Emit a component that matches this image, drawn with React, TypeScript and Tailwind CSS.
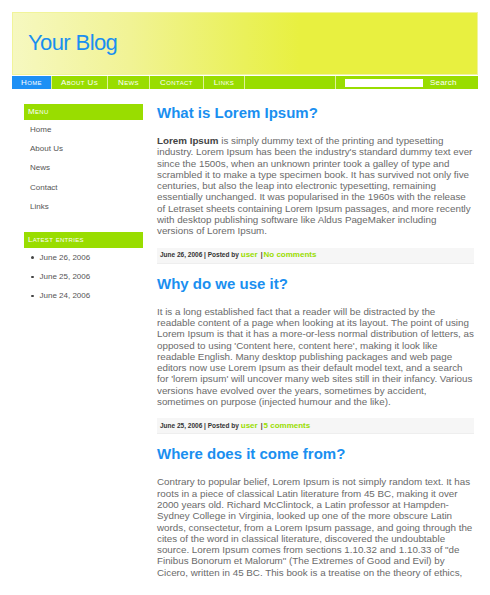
import type { ReactNode } from 'react';

const navItems = ['Home', 'About Us', 'News', 'Contact', 'Links'];
const navWidths = ['w-[39px]', 'w-[56px]', 'w-[42px]', 'w-[54px]', 'w-[41px]'];
const sideLinks = ['Home', 'About Us', 'News', 'Contact', 'Links'];
const entries = ['June 26, 2006', 'June 25, 2006', 'June 24, 2006'];

function SideHeader({ children }: { children: ReactNode }) {
  return (
    <div className="h-[16px] bg-[#99dd00] pl-[4px] text-[8px] leading-[16px] text-white [font-variant:small-caps] tracking-[0.3px]">
      {children}
    </div>
  );
}

function Post({ title, children, date, comments }: { title: string; children: ReactNode; date?: string; comments?: string }) {
  return (
    <div>
      <h2 className="text-[15px] leading-[18px] font-bold text-[#1a8ff0]">{title}</h2>
      <p className="mt-[13px] text-[9.8px] leading-[11.3px] text-[#6a6a6a]">{children}</p>
      {date && (
        <div className="mt-[11px] mb-[11px] h-[16px] bg-[#f6f6f6] border-b border-[#eeeeee] pl-[3px] flex items-center">
          <span className="text-[6.5px] font-bold text-[#333]">{date} | Posted by</span>
          <span className="ml-[2px] text-[8px] font-bold text-[#99dd00]">user</span>
          <span className="ml-[3px] text-[6.5px] font-bold text-[#333]">|</span>
          <span className="ml-[1px] text-[8px] font-bold text-[#99dd00]">{comments}</span>
        </div>
      )}
    </div>
  );
}

export default function App() {
  return (
    <div className="w-[490px] min-h-[595px] bg-white pt-[12px] font-['Liberation_Sans',Arial,sans-serif]">
      <div className="mx-[12px]">
        <header className="h-[63px] border border-[#f1f49a] bg-[linear-gradient(to_right,#f6f8c0_0%,#f1f395_25%,#eaf15a_50%,#e8f040_62%,#e8f040_100%)] pl-[15px] pt-[17px]">
          <div className="text-[22px] leading-[26px] text-[#1a8ff0] tracking-[-0.6px]">Your Blog</div>
        </header>

        <nav className="mt-[1px] h-[13px] flex bg-[#99dd00] text-white text-[8px] leading-[13px] [font-variant:small-caps] tracking-[0.4px]">
          {navItems.map((item, i) => (
            <div
              key={item}
              className={`${navWidths[i]} text-center ${i === 0 ? 'bg-[#1e90f5]' : 'border-l border-[#dff39a]'}`}
            >
              {item}
            </div>
          ))}
          <div className="w-[91px] border-l border-[#dff39a]" />
          <div className="flex-1 border-l border-[#dff39a] flex items-center pl-[9px]">
            <div className="w-[78px] h-[8px] bg-white" />
            <span className="ml-[7px] text-[8px] [font-variant:normal] tracking-[0.2px]">Search</span>
          </div>
        </nav>

        <div className="flex pl-[12px] pt-[15px]">
          <aside className="w-[119px] shrink-0">
            <SideHeader>Menu</SideHeader>
            <ul>
              {sideLinks.map((l) => (
                <li key={l} className="pl-[6px] text-[8px] leading-[19.2px] text-[#555]">{l}</li>
              ))}
            </ul>
            <div className="mt-[16px]">
              <SideHeader>Latest entries</SideHeader>
              <ul>
                {entries.map((e) => (
                  <li key={e} className="flex items-center pl-[7px] text-[8px] leading-[19.2px] text-[#555]">
                    <span className="w-[2.5px] h-[2.5px] rounded-full bg-[#444] mr-[6px]" />
                    {e}
                  </li>
                ))}
              </ul>
            </div>
          </aside>

          <main className="ml-[14px] w-[317px]">
            <Post title="What is Lorem Ipsum?" date="June 26, 2006" comments="No comments">
              <b className="text-[#444]">Lorem Ipsum</b> is simply dummy text of the printing and typesetting industry. Lorem Ipsum has been the industry's standard dummy text ever since the 1500s, when an unknown printer took a galley of type and scrambled it to make a type specimen book. It has survived not only five centuries, but also the leap into electronic typesetting, remaining essentially unchanged. It was popularised in the 1960s with the release of Letraset sheets containing Lorem Ipsum passages, and more recently with desktop publishing software like Aldus PageMaker including versions of Lorem Ipsum.
            </Post>
            <Post title="Why do we use it?" date="June 25, 2006" comments="5 comments">
              It is a long established fact that a reader will be distracted by the readable content of a page when looking at its layout. The point of using Lorem Ipsum is that it has a more-or-less normal distribution of letters, as opposed to using 'Content here, content here', making it look like readable English. Many desktop publishing packages and web page editors now use Lorem Ipsum as their default model text, and a search for 'lorem ipsum' will uncover many web sites still in their infancy. Various versions have evolved over the years, sometimes by accident, sometimes on purpose (injected humour and the like).
            </Post>
            <Post title="Where does it come from?">
              Contrary to popular belief, Lorem Ipsum is not simply random text. It has roots in a piece of classical Latin literature from 45 BC, making it over 2000 years old. Richard McClintock, a Latin professor at Hampden-Sydney College in Virginia, looked up one of the more obscure Latin words, consectetur, from a Lorem Ipsum passage, and going through the cites of the word in classical literature, discovered the undoubtable source. Lorem Ipsum comes from sections 1.10.32 and 1.10.33 of "de Finibus Bonorum et Malorum" (The Extremes of Good and Evil) by Cicero, written in 45 BC. This book is a treatise on the theory of ethics,
            </Post>
          </main>
        </div>
      </div>
    </div>
  );
}
